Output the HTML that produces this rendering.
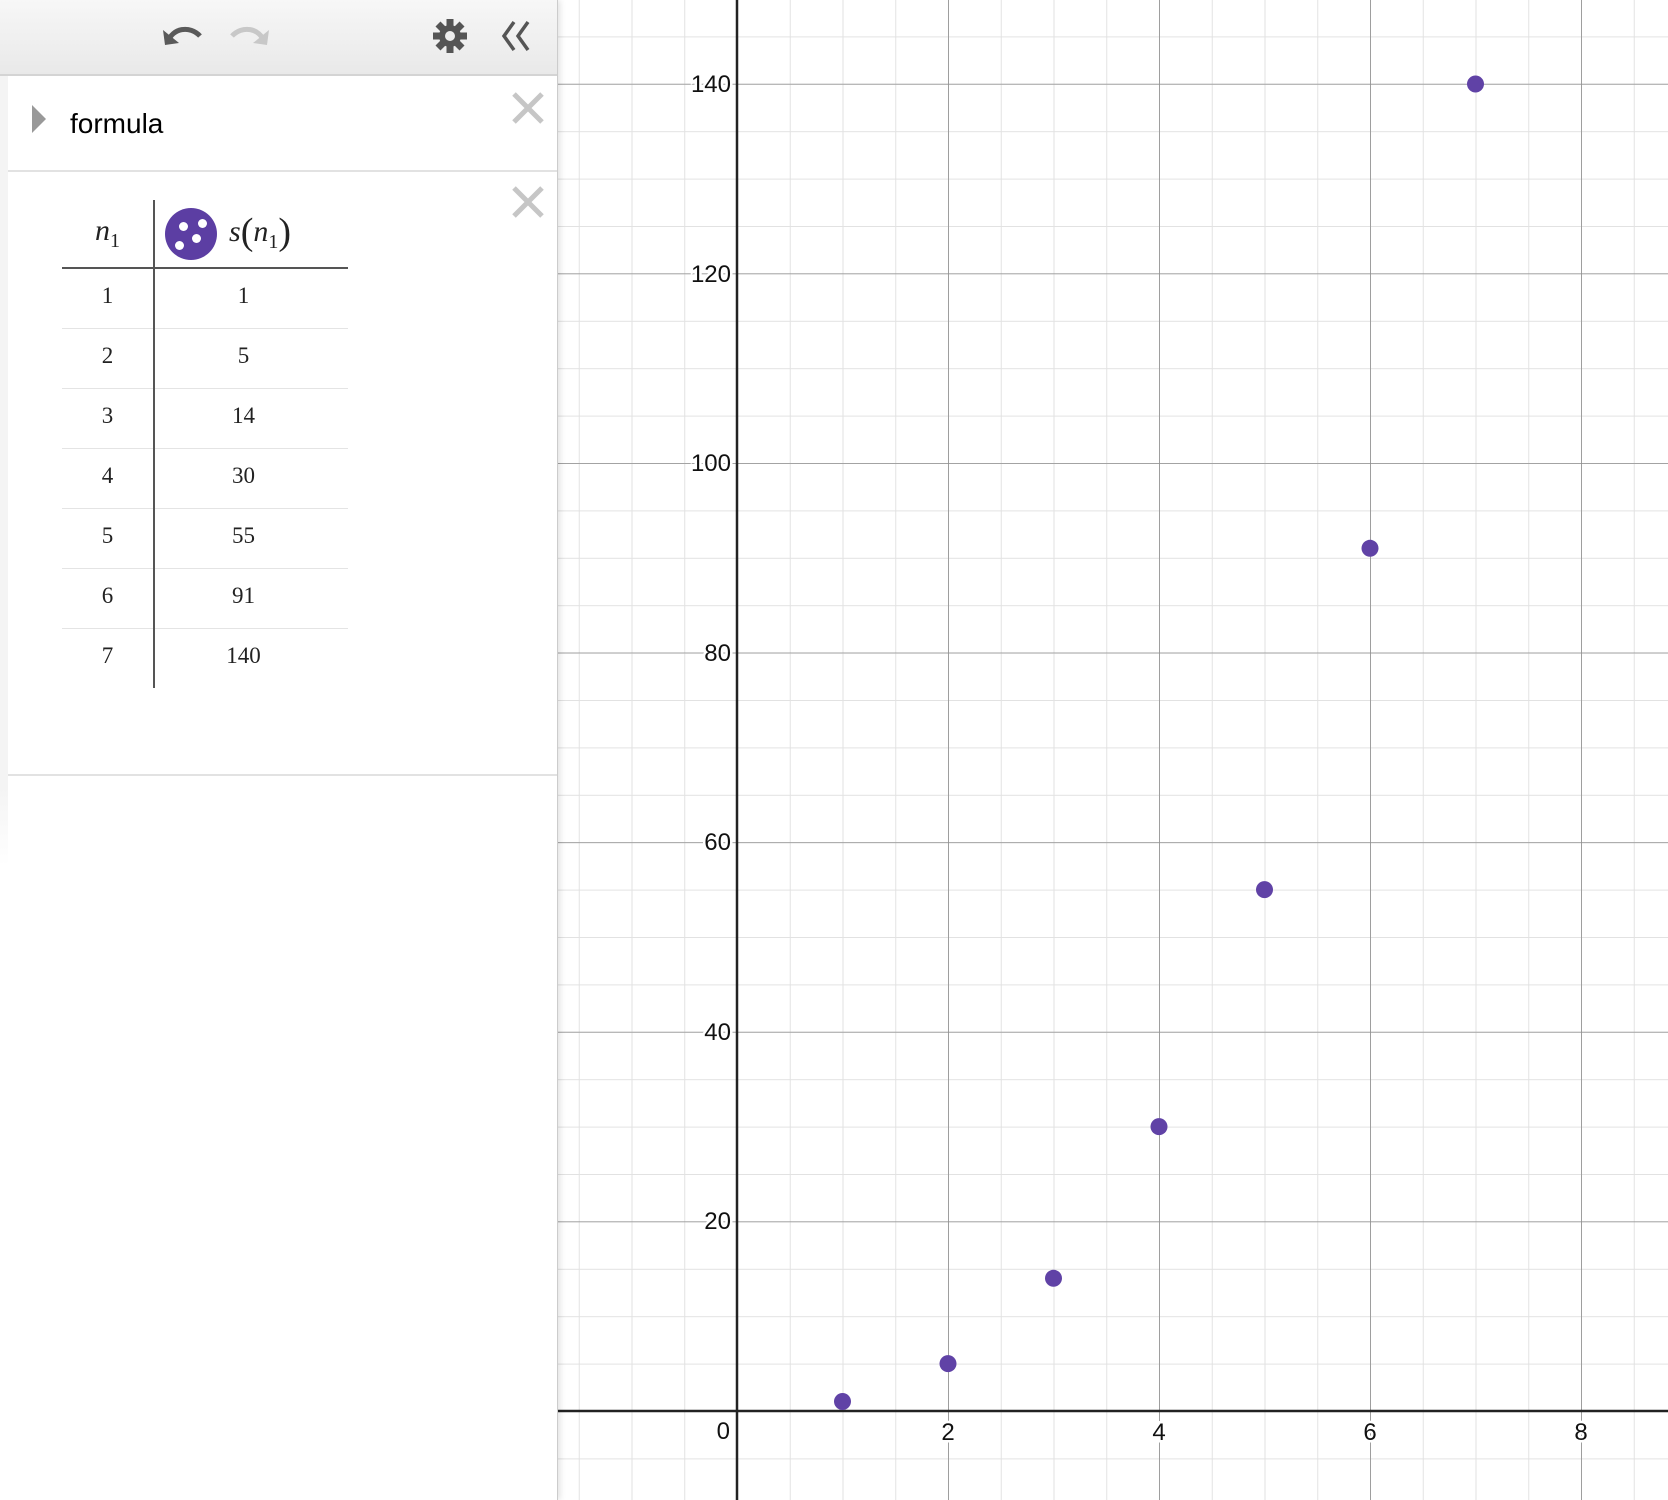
<!DOCTYPE html>
<html><head><meta charset="utf-8">
<style>
html,body{margin:0;padding:0;width:1668px;height:1500px;overflow:hidden;background:#fff;font-family:"Liberation Sans",sans-serif}
#panel{position:absolute;left:0;top:0;width:557px;height:1500px;background:#fff;border-right:1px solid #ccc;box-shadow:2px 0 6px rgba(0,0,0,.12);z-index:2}
#hdr{position:absolute;left:0;top:0;width:557px;height:74px;background:linear-gradient(#f7f7f7,#e9e9e9);border-bottom:2px solid #d4d4d4}
.row1{position:absolute;left:8px;top:76px;width:549px;height:94px;border-bottom:2px solid #e2e2e2}
.row2{position:absolute;left:8px;top:172px;width:549px;height:602px;border-bottom:2px solid #e2e2e2}
.gutter{position:absolute;left:0;top:76px;width:8px;height:790px;background:linear-gradient(#f4f4f4,#f4f4f4 90%,#fff)}
table{position:absolute;left:54px;top:28px;border-collapse:collapse}
td{height:53px;border-bottom:1px solid #e4e4e4;text-align:center;font-family:"Liberation Serif",serif;font-size:23px;color:#222;padding:0 0 6px 0;box-sizing:content-box}
td.a{width:91px;border-right:2px solid #555}
td.b{width:177px;padding-right:16px}
tr.h td{height:67px;border-bottom:2px solid #555;font-size:30px;font-style:italic;padding:0}
tr:last-child td{border-bottom:none}
</style></head><body>
<svg width="1668" height="1500" style="position:absolute;left:0;top:0">
<defs>
<pattern id="mi" patternUnits="userSpaceOnUse" x="737" y="1411" width="52.75" height="47.4">
<path d="M0 0V47.4M0 0H52.75" stroke="#e2e2e2" stroke-width="2" fill="none"/></pattern>
<pattern id="ma" patternUnits="userSpaceOnUse" x="737" y="1411" width="211" height="189.6">
<path d="M0 0V189.6M0 0H211" stroke="#8e8e8e" stroke-width="1.6" fill="none"/></pattern>
</defs>
<rect x="557" y="0" width="1111" height="1500" fill="url(#mi)"/>
<rect x="557" y="0" width="1111" height="1500" fill="url(#ma)"/>
<line x1="737" y1="0" x2="737" y2="1500" stroke="#222" stroke-width="2.5"/>
<line x1="557" y1="1411" x2="1668" y2="1411" stroke="#222" stroke-width="2.5"/>
<g font-family="Liberation Sans" font-size="24" fill="#111" stroke="#fff" stroke-width="5" paint-order="stroke" text-anchor="end">
<text x="731" y="92">140</text><text x="731" y="282">120</text><text x="731" y="471">100</text>
<text x="731" y="661">80</text><text x="731" y="850">60</text><text x="731" y="1040">40</text><text x="731" y="1229">20</text>
<text x="730" y="1439">0</text>
</g>
<g font-family="Liberation Sans" font-size="24" fill="#111" stroke="#fff" stroke-width="5" paint-order="stroke" text-anchor="middle">
<text x="948" y="1440">2</text><text x="1159" y="1440">4</text><text x="1370" y="1440">6</text><text x="1581" y="1440">8</text>
</g>
<g fill="#6042a6">
<circle cx="842.5" cy="1401.5" r="8.5"/><circle cx="948" cy="1363.6" r="8.5"/><circle cx="1053.5" cy="1278.3" r="8.5"/>
<circle cx="1159" cy="1126.6" r="8.5"/><circle cx="1264.5" cy="889.6" r="8.5"/><circle cx="1370" cy="548.3" r="8.5"/>
<circle cx="1475.5" cy="84" r="8.5"/>
</g>
</svg>
<div id="panel">
<div id="hdr">
<svg width="557" height="74" style="position:absolute;left:0;top:0">
<path d="M168 42 C172 28 190 25 200 36" stroke="#5a5a5a" stroke-width="5" fill="none"/>
<path d="M163 30 L165 45 L179 43 Z" fill="#5a5a5a"/>
<path d="M264 42 C260 28 242 25 232 36" stroke="#c8c8c8" stroke-width="5" fill="none"/>
<path d="M269 30 L267 45 L253 43 Z" fill="#c8c8c8"/>
<g transform="translate(450,36)" fill="#555">
<circle r="11"/>
<g><rect x="-3.5" y="-17" width="7" height="34"/><rect x="-3.5" y="-17" width="7" height="34" transform="rotate(45)"/><rect x="-3.5" y="-17" width="7" height="34" transform="rotate(90)"/><rect x="-3.5" y="-17" width="7" height="34" transform="rotate(135)"/></g>
<circle r="5" fill="#eee"/>
</g>
<path d="M514 22 L504 36 L514 50 M528 22 L518 36 L528 50" stroke="#555" stroke-width="3.5" fill="none"/>
</svg>
</div>
<div class="gutter"></div>
<div class="row1">
<svg width="30" height="40" style="position:absolute;left:22px;top:27px"><path d="M2 2 L16 16 L2 30 Z" fill="#999"/></svg>
<div style="position:absolute;left:62px;top:32px;font-size:28px;color:#000">formula</div>
<svg width="40" height="40" style="position:absolute;left:502px;top:14px"><path d="M4 4 L32 32 M32 4 L4 32" stroke="#c6c6c6" stroke-width="5"/></svg>
</div>
<div class="row2">
<svg width="40" height="40" style="position:absolute;left:502px;top:12px"><path d="M4 4 L32 32 M32 4 L4 32" stroke="#c6c6c6" stroke-width="5"/></svg>
<table>
<tr class="h"><td class="a">n<sub style="font-style:normal;font-size:20px">1</sub></td>
<td class="b" style="text-align:left"><span style="display:inline-block;vertical-align:middle;margin-left:10px;margin-right:12px;width:52px;height:52px;border-radius:50%;background:#5c3ea3;position:relative">
<i style="position:absolute;left:14px;top:14px;width:9px;height:9px;border-radius:50%;background:#fff"></i>
<i style="position:absolute;left:33px;top:11px;width:9px;height:9px;border-radius:50%;background:#fff"></i>
<i style="position:absolute;left:27px;top:26px;width:9px;height:9px;border-radius:50%;background:#fff"></i>
<i style="position:absolute;left:10px;top:33px;width:9px;height:9px;border-radius:50%;background:#fff"></i>
</span>s<span style="font-style:normal;font-size:38px;vertical-align:-3px">(</span>n<sub style="font-style:normal;font-size:20px">1</sub><span style="font-style:normal;font-size:38px;vertical-align:-3px">)</span></td></tr>
<tr><td class="a">1</td><td class="b">1</td></tr>
<tr><td class="a">2</td><td class="b">5</td></tr>
<tr><td class="a">3</td><td class="b">14</td></tr>
<tr><td class="a">4</td><td class="b">30</td></tr>
<tr><td class="a">5</td><td class="b">55</td></tr>
<tr><td class="a">6</td><td class="b">91</td></tr>
<tr><td class="a">7</td><td class="b">140</td></tr>
</table>
</div>
</div>
</body></html>
